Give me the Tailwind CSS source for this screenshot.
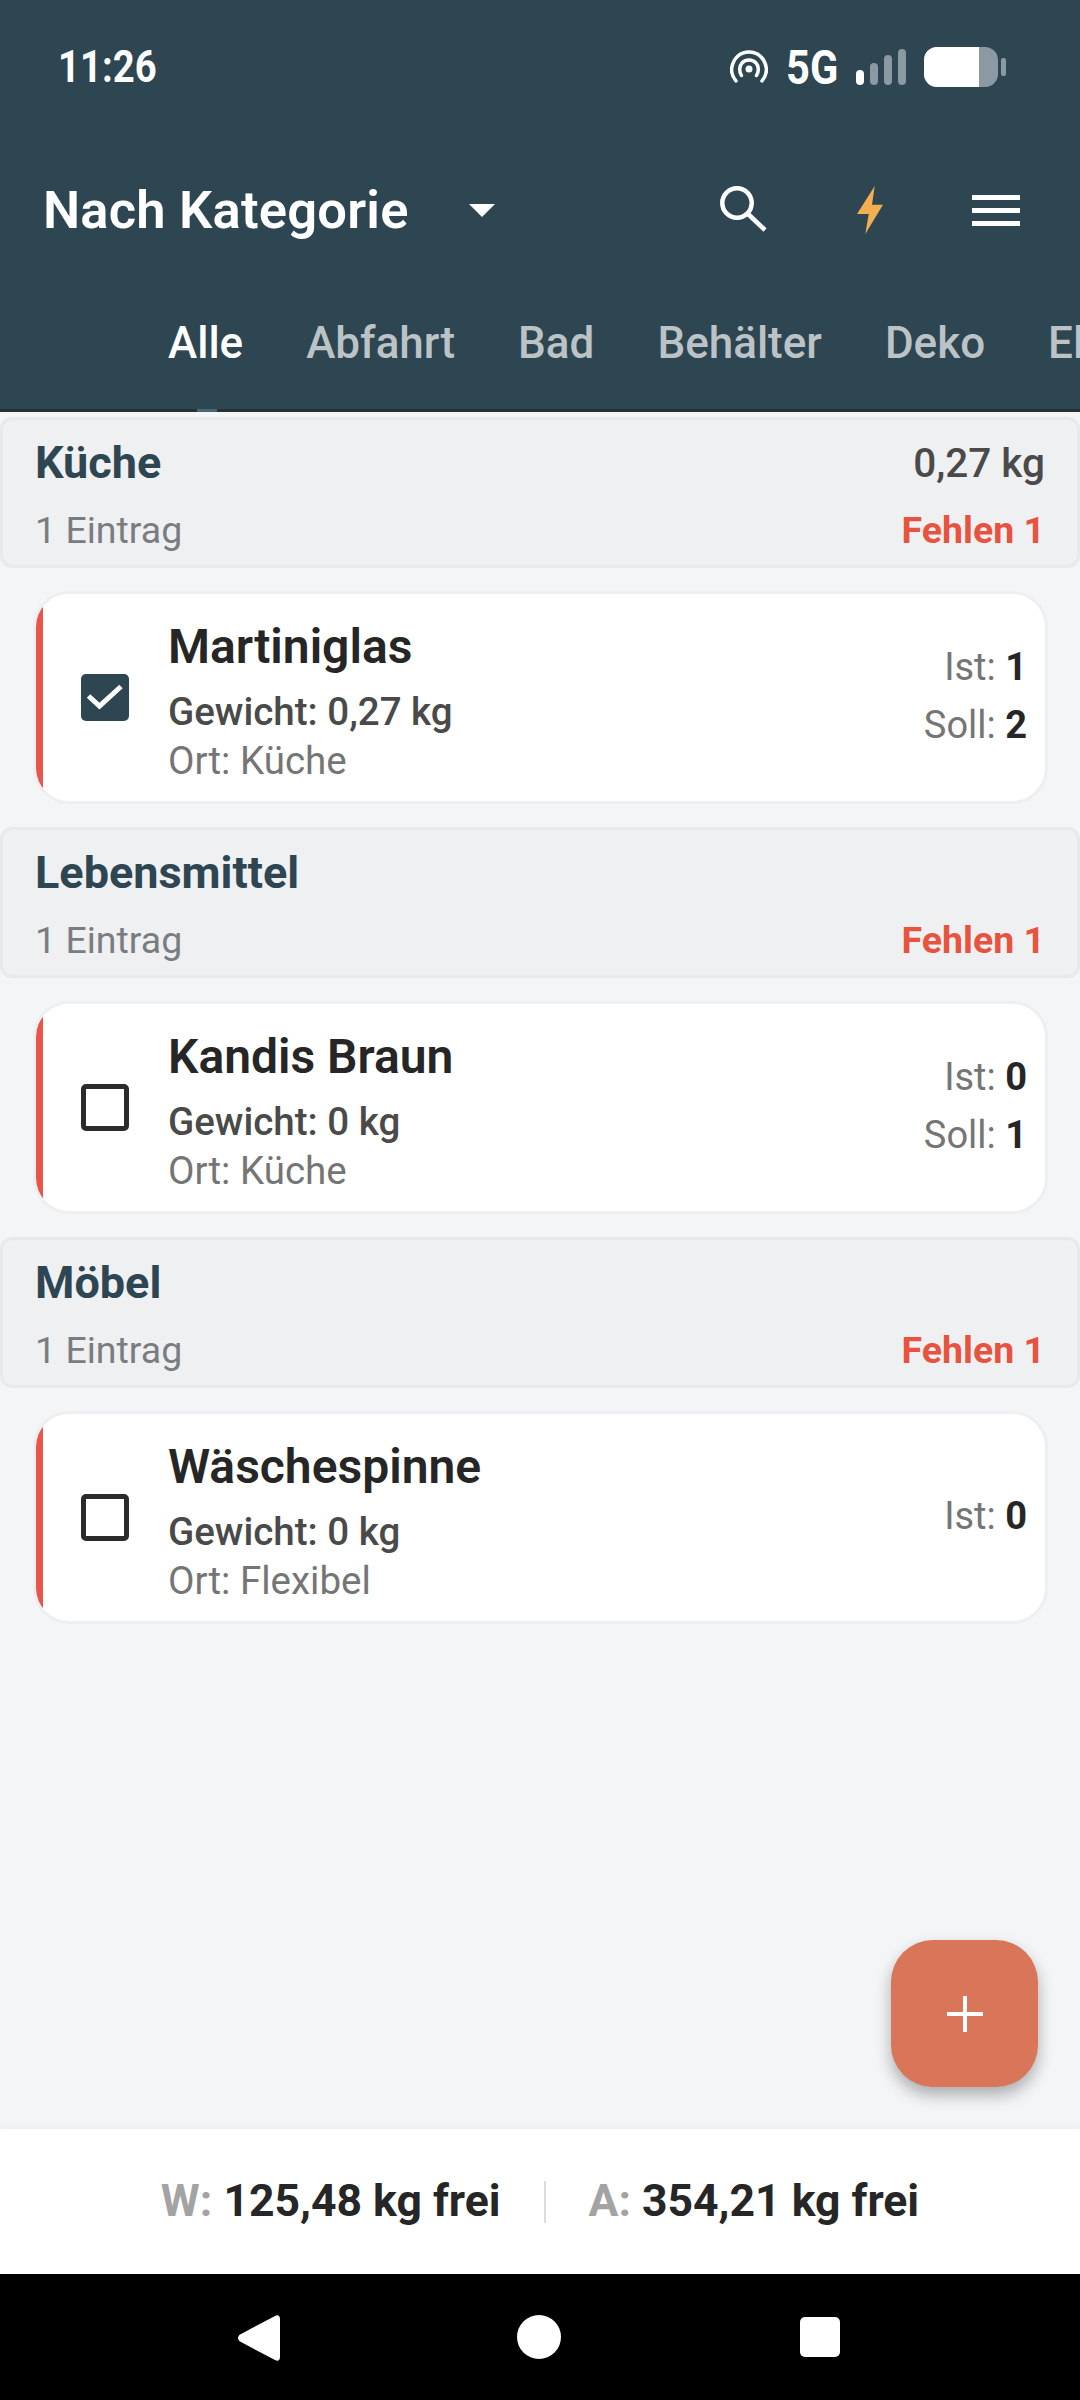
<!DOCTYPE html>
<html lang="de">
<head>
  <meta charset="UTF-8" />
  <title>Packliste</title>
  <script src="https://cdn.jsdelivr.net/npm/@tailwindcss/browser@4"></script>
</head>
<body class="relative flex flex-col h-[2400px] w-[1080px] overflow-hidden bg-[#f4f5f7] font-['Roboto',sans-serif]">

  <!-- App bar -->
  <header class="bg-[#2e4552] h-[412px] shrink-0 flex flex-col border-b-[3px] border-[#2a2f33] text-white">
    <div class="h-[134px] flex items-center justify-between pl-[58px] pr-[74px]">
      <span class="text-[44px] font-bold leading-none scale-x-[0.87] origin-left">11:26</span>
      <div class="flex items-center">
        <svg class="w-[38px] h-[34px]" viewBox="0 0 38 34" fill="none" stroke="white" stroke-width="3.5" stroke-linecap="round">
          <path d="M6 31C2 26 1 22 1.800 17.500C3.500 8 10 2 19 2C28 2 34.500 8 36.200 17.500C37 22 36 26 32 31" />
          <path d="M11.500 25.500C9 22 9 16 12 13C15.500 9 22.500 9 26 13C29 16 29 22 26.500 25.500" />
          <circle cx="19" cy="19" r="3.500" fill="white" stroke="none" />
        </svg>
        <span class="ml-[18px] text-[49px] font-bold leading-none scale-x-[0.85] origin-left w-[55px]">5G</span>
        <svg class="ml-[15px] w-[50px] h-[36px]" viewBox="0 0 50 36">
          <rect x="0" y="21" width="8" height="15" rx="4" fill="white" />
          <rect x="14" y="14" width="8" height="22" rx="4" fill="#8b99a2" />
          <rect x="28" y="6" width="8" height="30" rx="4" fill="#8b99a2" />
          <rect x="42" y="0" width="8" height="36" rx="4" fill="#8b99a2" />
        </svg>
        <svg class="ml-[18px] w-[82px] h-[40px]" viewBox="0 0 82 40">
          <rect x="0" y="0" width="74" height="40" rx="13" fill="#8b99a2" />
          <path d="M13 0H55V40H13A13 13 0 0 1 0 27V13A13 13 0 0 1 13 0Z" fill="white" />
          <rect x="77" y="11" width="5" height="18" rx="2" fill="#8b99a2" />
        </svg>
      </div>
    </div>
    <div class="h-[152px] flex items-center pl-[43px] pr-[60px]">
      <span class="text-[52.500px] font-semibold leading-none tracking-[0.2px]">Nach Kategorie</span>
      <svg class="ml-[60px] w-[26px] h-[13px]" viewBox="0 0 26 13"><path d="M0 0H26L13 13Z" fill="white" /></svg>
      <svg class="ml-auto w-[48px] h-[48px]" viewBox="0 0 48 48" fill="none" stroke="white" stroke-width="4.500">
        <circle cx="17" cy="17" r="14.700" />
        <path d="M27 27L45 44" />
      </svg>
      <svg class="ml-[89px] w-[26px] h-[48px]" viewBox="0 0 26 48"><path d="M17.700 0L0 28H11.700L8.300 48L26 18.700H15Z" fill="#f2ae4f" /></svg>
      <div class="ml-[89px] w-[48px] flex flex-col gap-[8px]">
        <div class="h-[5px] bg-white"></div>
        <div class="h-[5px] bg-white"></div>
        <div class="h-[5px] bg-white"></div>
      </div>
    </div>
    <nav class="flex-1 flex gap-[63px] pl-[168px] pt-[35px] text-[44px] font-medium leading-none whitespace-nowrap overflow-hidden text-[#bcc3c7]">
      <span class="text-white">Alle</span>
      <span>Abfahrt</span>
      <span>Bad</span>
      <span>Behälter</span>
      <span>Deko</span>
      <span>Elektro</span>
    </nav>
  </header>
  <div class="absolute left-[197px] top-[409px] w-[20px] h-[3px] bg-[#47687a]"></div>

  <!-- Gruppen -->
  <main class="flex-1 flex flex-col pt-[5px]">
    <section class="h-[151px] border-[3px] border-[#e8e9eb] rounded-[12px] bg-[#eff0f2] px-[32px] pt-[18px]">
      <div class="flex justify-between items-center h-[50px]">
        <h2 class="text-[45px] font-bold text-[#2e4552]">Küche</h2>
        <span class="text-[40.500px] font-medium text-[#4a4a4a]">0,27 kg</span>
      </div>
      <div class="flex justify-between items-center h-[50px] mt-[17px]">
        <span class="text-[37.500px] text-[#7a7d80]">1 Eintrag</span>
        <span class="text-[37.500px] font-bold text-[#e8533f]">Fehlen 1</span>
      </div>
    </section>
    <article class="ml-[33px] mr-[32px] my-[23px] h-[213px] shrink-0 flex overflow-hidden rounded-[36px] border-[3px] border-[#eeeff0] bg-white">
      <div class="w-[7px] bg-[#e9554a]"></div>
      <div class="flex-1 flex items-center pl-[38px] pr-[18px]">
        <div class="w-[48px] h-[47px] rounded-[5px] bg-[#2e4552]">
          <svg class="w-[48px] h-[47px]" viewBox="0 0 48 47" fill="none" stroke="white" stroke-width="5"><path d="M7.500 22L18.500 32L40 12.500" /></svg>
        </div>
        <div class="ml-[39px] flex-1 pt-[6px]">
          <h3 class="text-[48px] font-semibold text-[#262626] leading-[56px]">Martiniglas</h3>
          <p class="text-[38.500px] font-medium text-[#4a4a4a] leading-[44px] mt-[15px]">Gewicht: 0,27 kg</p>
          <p class="text-[38.500px] text-[#757575] leading-[42px] mt-[6px]">Ort: Küche</p>
        </div>
        <div class="text-right text-[38px] text-[#757575] leading-[44px] flex flex-col gap-[14px] pb-[4px]">
          <span>Ist: <b class="font-bold text-[#262626]">1</b></span>
          <span>Soll: <b class="font-bold text-[#262626]">2</b></span>
        </div>
      </div>
    </article>

    <section class="h-[151px] border-[3px] border-[#e8e9eb] rounded-[12px] bg-[#eff0f2] px-[32px] pt-[18px]">
      <div class="flex justify-between items-center h-[50px]">
        <h2 class="text-[45px] font-bold text-[#2e4552]">Lebensmittel</h2>
      </div>
      <div class="flex justify-between items-center h-[50px] mt-[17px]">
        <span class="text-[37.500px] text-[#7a7d80]">1 Eintrag</span>
        <span class="text-[37.500px] font-bold text-[#e8533f]">Fehlen 1</span>
      </div>
    </section>
    <article class="ml-[33px] mr-[32px] my-[23px] h-[213px] shrink-0 flex overflow-hidden rounded-[36px] border-[3px] border-[#eeeff0] bg-white">
      <div class="w-[7px] bg-[#e9554a]"></div>
      <div class="flex-1 flex items-center pl-[38px] pr-[18px]">
        <div class="w-[48px] h-[47px] rounded-[5px] border-[5px] border-[#2b2b2b]"></div>
        <div class="ml-[39px] flex-1 pt-[6px]">
          <h3 class="text-[48px] font-semibold text-[#262626] leading-[56px]">Kandis Braun</h3>
          <p class="text-[38.500px] font-medium text-[#4a4a4a] leading-[44px] mt-[15px]">Gewicht: 0 kg</p>
          <p class="text-[38.500px] text-[#757575] leading-[42px] mt-[6px]">Ort: Küche</p>
        </div>
        <div class="text-right text-[38px] text-[#757575] leading-[44px] flex flex-col gap-[14px] pb-[4px]">
          <span>Ist: <b class="font-bold text-[#262626]">0</b></span>
          <span>Soll: <b class="font-bold text-[#262626]">1</b></span>
        </div>
      </div>
    </article>

    <section class="h-[151px] border-[3px] border-[#e8e9eb] rounded-[12px] bg-[#eff0f2] px-[32px] pt-[18px]">
      <div class="flex justify-between items-center h-[50px]">
        <h2 class="text-[45px] font-bold text-[#2e4552]">Möbel</h2>
      </div>
      <div class="flex justify-between items-center h-[50px] mt-[17px]">
        <span class="text-[37.500px] text-[#7a7d80]">1 Eintrag</span>
        <span class="text-[37.500px] font-bold text-[#e8533f]">Fehlen 1</span>
      </div>
    </section>
    <article class="ml-[33px] mr-[32px] my-[23px] h-[213px] shrink-0 flex overflow-hidden rounded-[36px] border-[3px] border-[#eeeff0] bg-white">
      <div class="w-[7px] bg-[#e9554a]"></div>
      <div class="flex-1 flex items-center pl-[38px] pr-[18px]">
        <div class="w-[48px] h-[47px] rounded-[5px] border-[5px] border-[#2b2b2b]"></div>
        <div class="ml-[39px] flex-1 pt-[6px]">
          <h3 class="text-[48px] font-semibold text-[#262626] leading-[56px]">Wäschespinne</h3>
          <p class="text-[38.500px] font-medium text-[#4a4a4a] leading-[44px] mt-[15px]">Gewicht: 0 kg</p>
          <p class="text-[38.500px] text-[#757575] leading-[42px] mt-[6px]">Ort: Flexibel</p>
        </div>
        <div class="text-right text-[38px] text-[#757575] leading-[44px] pb-[4px]">
          <span>Ist: <b class="font-bold text-[#262626]">0</b></span>
        </div>
      </div>
    </article>
  </main>

  <!-- FAB -->
  <button class="absolute left-[891px] top-[1940px] w-[147px] h-[147px] rounded-[42px] bg-[#d97659] shadow-[0_8px_16px_rgba(0,0,0,0.3)] flex items-center justify-center">
    <svg class="w-[36px] h-[36px]" viewBox="0 0 36 36"><path d="M16 0H20V16H36V20H20V36H16V20H0V16H16Z" fill="white" /></svg>
  </button>

  <!-- Gewicht frei -->
  <footer class="h-[145px] shrink-0 bg-white flex items-center justify-center text-[44.500px] font-bold text-[#262626] shadow-[0_-2px_6px_rgba(0,0,0,0.04)]">
    <span><span class="text-[#a3a3a3]">W:</span> 125,48 kg frei</span>
    <div class="w-[2px] h-[42px] bg-[#dcdcdc] mx-[43px]"></div>
    <span><span class="text-[#a3a3a3]">A:</span> 354,21 kg frei</span>
  </footer>

  <!-- Navigationsleiste -->
  <div class="h-[126px] shrink-0 bg-black relative">
    <svg class="absolute left-[238px] top-[41px] w-[42px] h-[46px]" viewBox="0 0 42 46"><path d="M37 1C40 -1 42 1 42 4V42C42 45 40 47 37 45L3 27C-1 25 -1 21 3 19Z" fill="white" /></svg>
    <div class="absolute left-[517px] top-[41px] w-[44px] h-[44px] rounded-full bg-white"></div>
    <div class="absolute left-[800px] top-[43px] w-[40px] h-[40px] rounded-[5px] bg-white"></div>
  </div>
</body>
</html>
